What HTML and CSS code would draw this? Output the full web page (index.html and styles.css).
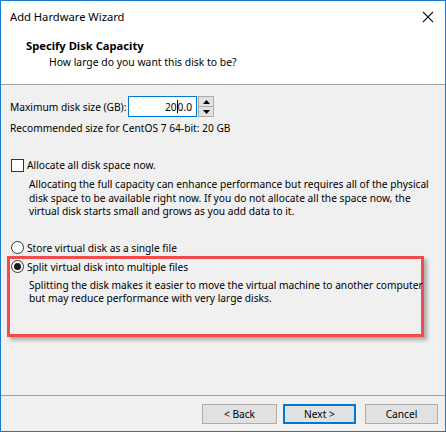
FILE: index.html
```html
<!DOCTYPE html>
<html>
<head>
<meta charset="utf-8">
<title>Add Hardware Wizard</title>
<link rel="stylesheet" href="styles.css">
</head>
<body>
<div class="window">
  <div class="top">
    <div class="titlebar">
      <span class="title">Add Hardware Wizard</span>
      <svg class="close" width="12" height="12" viewBox="0 0 12 12"><path d="M1 1 L11 11 M11 1 L1 11" stroke="#1a1a1a" stroke-width="1.1" fill="none"/></svg>
    </div>
    <div class="header">
      <div class="h-title">Specify Disk Capacity</div>
      <div class="h-sub">How large do you want this disk to be?</div>
    </div>
  </div>
  <div class="body">
    <div class="size-row">
      <span class="size-label">Maximum disk size (GB):</span>
      <div class="input"><span>20</span><span class="caret"></span><span>0.0</span></div>
      <div class="spin">
        <div class="spin-btn"><svg width="7" height="4" viewBox="0 0 7 4"><path d="M3.5 0 L7 4 L0 4 Z" fill="#000"/></svg></div>
        <div class="spin-btn"><svg width="7" height="4" viewBox="0 0 7 4"><path d="M0 0 L7 0 L3.5 4 Z" fill="#000"/></svg></div>
      </div>
    </div>
    <div class="recommend">Recommended size for CentOS 7 64-bit: 20 GB</div>
    <div class="check-row"><span class="checkbox"></span><span class="lbl">Allocate all disk space now.</span></div>
    <p class="desc">Allocating the full capacity can enhance performance but requires all of the physical disk space to be available right now. If you do not allocate all the space now, the virtual disk starts small and grows as you add data to it.</p>
    <div class="radio-row first"><span class="radio"></span><span class="lbl">Store virtual disk as a single file</span></div>
    <div class="highlight">
      <div class="radio-row"><span class="radio checked"></span><span class="lbl">Split virtual disk into multiple files</span></div>
      <p class="desc desc2">Splitting the disk makes it easier to move the virtual machine to another computer but may reduce performance with very large disks.</p>
    </div>
  </div>
  <div class="footer">
    <button class="btn back">&lt; Back</button>
    <button class="btn next">Next &gt;</button>
    <button class="btn cancel">Cancel</button>
  </div>
</div>
</body>
</html>
```
FILE: styles.css
```css
* { box-sizing: border-box; }
html, body { margin: 0; padding: 0; }
body {
  font-family: "Noto Sans", "Liberation Sans", sans-serif;
  font-size: 10.2px;
  color: #000;
  background: #fff;
}
.window {
  width: 446px;
  height: 432px;
  border: 1px solid #1979ca;
  background: #f0f0f0;
  display: flex;
  flex-direction: column;
}
.top {
  background: #fff;
  height: 84px;
  border-bottom: 1px solid #a0a0a0;
  flex-shrink: 0;
}
.titlebar {
  height: 31px;
  display: flex;
  align-items: center;
  justify-content: space-between;
  padding: 0 9px 0 9px;
}
.title {
  font-size: 11.2px;
  line-height: 14px;
}
.close { margin-right: 2px; margin-top: 1px; }
.header { padding-top: 7px; }
.h-title {
  font-weight: bold;
  font-size: 11.2px;
  line-height: 14px;
  padding-left: 25px;
}
.h-sub {
  font-size: 10.4px;
  line-height: 14px;
  padding-left: 48px;
  margin-top: 2px;
}
.body {
  flex: 1;
  display: flex;
  flex-direction: column;
}
.size-row {
  margin-top: 11px;
  display: flex;
  align-items: center;
  height: 21px;
  padding-left: 9px;
}
.size-label { line-height: 14px; width: 118px; }
.input {
  width: 69px;
  height: 21px;
  border: 1px solid #0078d7;
  background: #fff;
  display: flex;
  justify-content: flex-end;
  align-items: center;
  padding-right: 4px;
  line-height: 14px;
}
.caret {
  display: inline-block;
  width: 1px;
  height: 13px;
  background: #000;
}
.spin {
  margin-left: 1px;
  width: 16px;
  height: 21px;
  display: flex;
  flex-direction: column;
}
.spin-btn {
  flex: 1;
  background: #e1e1e1;
  border: 1px solid #adadad;
  display: flex;
  align-items: center;
  justify-content: center;
}
.spin-btn + .spin-btn { border-top: none; }
.recommend {
  line-height: 14px;
  margin-top: 4px;
  padding-left: 9px;
}
.check-row, .radio-row {
  display: flex;
  align-items: center;
  height: 14px;
  padding-left: 10px;
}
.check-row { margin-top: 23px; }
.checkbox {
  width: 13px;
  height: 13px;
  border: 1px solid #333;
  background: #fff;
  flex-shrink: 0;
}
.radio {
  width: 13px;
  height: 13px;
  border: 1px solid #333;
  border-radius: 50%;
  background: #fff;
  flex-shrink: 0;
  display: flex;
  align-items: center;
  justify-content: center;
}
.radio.checked::after {
  content: "";
  width: 7px;
  height: 7px;
  border-radius: 50%;
  background: #1a1a1a;
}
.lbl { margin-left: 3px; line-height: 14px; }
.desc {
  margin: 6px 0 0 28px;
  line-height: 13.5px;
  width: 410px;
}
.radio-row.first { margin-top: 22px; }
.highlight {
  margin: 1px 0 0 6px;
  width: 417px;
  height: 81px;
  border: 3px solid #f24b4b;
  box-shadow: 3px 3px 4px rgba(0,0,0,0.3);
  padding-top: 1px;
}
.highlight .radio-row { padding-left: 1px; }
.desc2 { margin: 5px 0 0 19px; width: 398px; }
.footer {
  height: 36px;
  border-top: 1px solid #a0a0a0;
  display: flex;
  align-items: flex-start;
  justify-content: flex-end;
  padding: 8px 7px 0 0;
  flex-shrink: 0;
}
.btn {
  font-family: inherit;
  font-size: 10.2px;
  height: 20px;
  width: 75px;
  background: #e1e1e1;
  border: 1px solid #adadad;
  padding: 0;
  color: #000;
}
.back { margin-right: 6px; }
.next { width: 73px; border: 2px solid #0078d7; margin-right: 9px; }
.cancel { width: 73px; }
```
